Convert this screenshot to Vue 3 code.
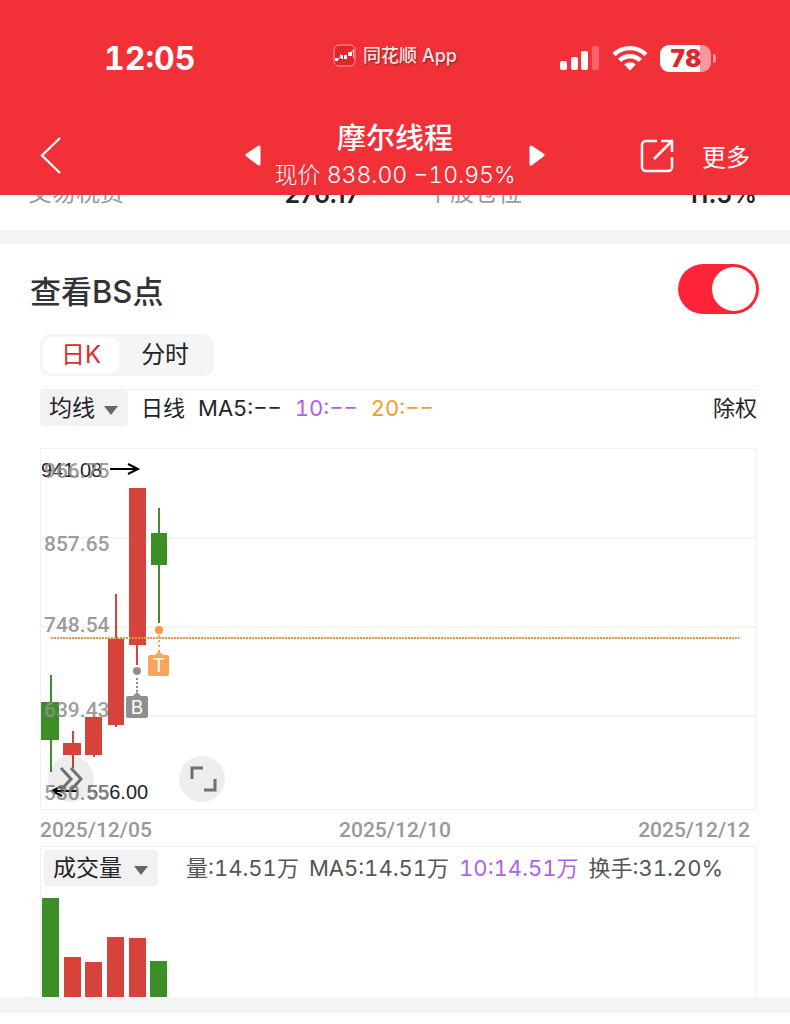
<template>
    <div class="page">
        <header class="header">
            <div class="status">
                <span class="status__time">12:05</span>
                <span class="status__app">
                    <svg width="24" height="24" viewBox="0 0 24 24">
                        <rect x="1" y="1" width="21" height="21" rx="5" fill="#e3262d" stroke="#ff9c9f" />
                        <path d="M3 15h3M6 14l2-1M12 12l2-1M17 9l3-2" stroke="#fff" fill="none" />
                        <path d="M2 14h3v3H2zM8 11h2v4H8zM11 11h3v4h-3zM16 8h3v4h-3z" fill="#fff" />
                        <path d="M7.5 10v4M15.5 8v4M20.5 5v9" stroke="#ffc9ca" fill="none" />
                    </svg>
                    同花顺 App
                </span>
                <span class="status__icons">
                    <svg width="40" height="26" viewBox="0 0 40 26">
                        <rect x="0" y="16" width="7" height="9" rx="2" fill="#fff" />
                        <rect x="11" y="12" width="7" height="13" rx="2" fill="#fff" />
                        <rect x="21" y="6" width="7" height="19" rx="2" fill="#fff" />
                        <rect x="32" y="1" width="7" height="24" rx="2" fill="#fff" opacity="0.25" />
                    </svg>
                    <svg width="36" height="26" viewBox="0 0 36 26">
                        <g fill="none" stroke="#fff" stroke-width="4.4">
                            <path d="M2 9.6a23 23 0 0 1 32 0" />
                            <path d="M7.6 15.4a15 15 0 0 1 20.8 0" />
                        </g>
                        <path d="M12.2 19.6a8.4 8.4 0 0 1 11.6 0L18 25.4z" fill="#fff" />
                    </svg>
                    <span class="battery"><span class="battery__body">78</span></span>
                </span>
            </div>
            <div class="nav">
                <button class="icon-btn" aria-label="返回">
                    <svg width="24" height="40" viewBox="0 0 24 40">
                        <path d="M20 2L2 19.500L20 37" fill="none" stroke="#fff" stroke-width="2.200" />
                    </svg>
                </button>
                <div class="stock">
                    <button class="icon-btn" aria-label="上一只">
                        <svg width="16" height="22" viewBox="0 0 16 22">
                            <path d="M2 10L14 2v17z" fill="#fff" stroke="#fff" stroke-width="3" stroke-linejoin="round" />
                        </svg>
                    </button>
                    <div class="stock__info">
                        <h1>摩尔线程</h1>
                        <p>现价 838.00 −10.95%</p>
                    </div>
                    <button class="icon-btn" aria-label="下一只">
                        <svg width="16" height="22" viewBox="0 0 16 22">
                            <path d="M14 10L2 2v17z" fill="#fff" stroke="#fff" stroke-width="3" stroke-linejoin="round" />
                        </svg>
                    </button>
                </div>
                <div class="nav__right">
                    <button class="icon-btn" aria-label="分享">
                        <svg width="34" height="34" viewBox="0 0 34 34" fill="none" stroke="#fff" stroke-width="2.500">
                            <path d="M17 2H6a4 4 0 0 0-4 4v22a4 4 0 0 0 4 4h22a4 4 0 0 0 4-4V18" />
                            <path d="M21 2h11v11M32 2L14 20" />
                        </svg>
                    </button>
                    <button class="more">更多</button>
                </div>
            </div>
        </header>

        <dl class="summary">
            <div><dt>交易税费</dt><dd>276.17</dd></div>
            <div><dt>个股仓位</dt><dd>11.5%</dd></div>
        </dl>

        <main class="card">
            <div class="bs">
                <label for="bs">查看BS点</label>
                <input id="bs" v-model="showBs" class="switch" type="checkbox">
            </div>

            <div class="content">
                <div class="tabs">
                    <button
                        v-for="tab in tabs"
                        :key="tab"
                        :class="{ active: tab === currentTab }"
                        @click="currentTab = tab"
                    >{{ tab }}</button>
                </div>

                <div class="indicators">
                    <span class="dropdown">
                        <select aria-label="主图指标"><option>均线</option></select>
                    </span>
                    <span>日线</span>
                    <span>MA5:−−</span>
                    <span class="purple">10:−−</span>
                    <span class="yellow">20:−−</span>
                    <span class="indicators__right">除权</span>
                </div>

                <div class="chart">
                    <svg class="chart__svg" width="100%" height="360">
                        <line v-for="y in [89, 178, 267]" :key="y" x1="0" x2="100%" :y1="y" :y2="y" stroke="#f4f4f4" stroke-width="2" />
                        <g v-for="c in candles" :key="c.x" :fill="c.up ? red : green">
                            <rect :x="c.x" :y="c.open" :width="c.w" :height="c.close - c.open" />
                            <rect :x="c.wick" :y="c.high" width="2" :height="c.low - c.high" />
                        </g>
                        <!-- линия текущей цены -->
                        <line x1="10" x2="97.7%" y1="189" y2="189" stroke="#ef9045" stroke-width="2" stroke-dasharray="2 1" />
                        <g v-if="showBs">
                            <circle cx="118" cy="181" r="4" fill="#fd9640" />
                            <path d="M118 186v17" stroke="#fda45c" stroke-width="2" stroke-dasharray="2 3" />
                            <path d="M109 206h5l4-4 4 4h4a2 2 0 0 1 2 2v17a2 2 0 0 1-2 2h-17a2 2 0 0 1-2-2v-17a2 2 0 0 1 2-2z" fill="#fda45c" />
                            <text class="mark" x="118" y="223">T</text>
                            <circle cx="96" cy="222" r="4" fill="#8f8f8f" />
                            <path d="M96 229v15" stroke="#8f8f8f" stroke-width="2" stroke-dasharray="2 2" />
                            <path d="M87 247h5l4-4 4 4h5a2 2 0 0 1 2 2v18a2 2 0 0 1-2 2h-18a2 2 0 0 1-2-2v-18a2 2 0 0 1 2-2z" fill="#8f8f8f" />
                            <text class="mark" x="96" y="265">B</text>
                        </g>
                        <text class="peak" x="0" y="28">941.08</text>
                        <path class="arrow" d="M69 20h28M87 15l10 5l-10 5" />
                        <text class="peak" x="46" y="350">556.00</text>
                        <path class="arrow" d="M36 342H11M21 337l-10 5l10 5" />
                        <text v-for="l in priceLabels" :key="l.y" class="price" x="3" :y="l.y">{{ l.text }}</text>
                    </svg>
                    <div class="chart__tools">
                        <button aria-label="展开">
                            <svg width="46" height="46" viewBox="0 0 46 46">
                                <path d="M13 12l10 11l-10 11M23 12l10 11l-10 11" />
                            </svg>
                        </button>
                        <button aria-label="全屏">
                            <svg width="46" height="46" viewBox="0 0 46 46">
                                <path d="M13 23V12h11M25 34h11V23" />
                            </svg>
                        </button>
                    </div>
                </div>

                <div class="dates">
                    <span>2025/12/05</span>
                    <span>2025/12/10</span>
                    <span>2025/12/12</span>
                </div>

                <div class="volume">
                    <div class="volume__head">
                        <span class="dropdown dropdown--wide">
                            <select aria-label="副图指标"><option>成交量</option></select>
                        </span>
                        <span>量:14.51万</span>
                        <span>MA5:14.51万</span>
                        <span class="purple">10:14.51万</span>
                        <span>换手:31.20%</span>
                    </div>
                    <svg class="chart__svg" width="100%" height="111">
                        <rect
                            v-for="v in volumes"
                            :key="v.x"
                            :x="v.x"
                            :y="111 - v.h"
                            width="17"
                            :height="v.h"
                            :fill="v.up ? red : green"
                        />
                    </svg>
                </div>
            </div>
        </main>
        <div class="divider"></div>
    </div>
</template>

<script setup>
import { ref } from "vue";

const red = "#d5433b";
const green = "#3e8e28";

const showBs = ref(true);
const tabs = ["日K", "分时"];
const currentTab = ref("日K");

const candles = [
    { x: 0, w: 18, open: 253, close: 291, wick: 9, high: 226, low: 323, up: false },
    { x: 22, w: 18, open: 294, close: 306, wick: 31, high: 282, low: 319, up: true },
    { x: 44, w: 17, open: 268, close: 306, wick: 52, high: 268, low: 308, up: true },
    { x: 67, w: 16, open: 190, close: 276, wick: 74, high: 145, low: 278, up: true },
    { x: 88, w: 17, open: 39, close: 196, wick: 95, high: 39, low: 216, up: true },
    { x: 110, w: 16, open: 84, close: 116, wick: 117, high: 59, low: 174, up: false },
];

const priceLabels = [
    { text: "966.75", y: 29 },
    { text: "857.65", y: 102 },
    { text: "748.54", y: 183 },
    { text: "639.43", y: 268 },
    { text: "530.55", y: 351 },
];

const volumes = [
    { x: 1, h: 99, up: false },
    { x: 23, h: 40, up: true },
    { x: 44, h: 35, up: true },
    { x: 66, h: 60, up: true },
    { x: 88, h: 59, up: true },
    { x: 109, h: 36, up: false },
];
</script>

<style>
body {
    background: #ffffff;
}
</style>

<style scoped>
.page {
    font-family: Inter, "Noto Sans CJK SC", sans-serif;
    font-variant-numeric: tabular-nums;
    color: #222428;
}
button,
select {
    font: inherit;
    color: inherit;
    border: 0;
    padding: 0;
    background: none;
}
.header {
    background: #f23038;
    color: #ffffff;
    height: 195px;
}
.status,
.nav {
    display: grid;
    grid-template-columns: 1fr auto 1fr;
    align-items: center;
}
.status {
    height: 116px;
    padding: 0 74px;
}
.status__time {
    padding-left: 30px;
    font-size: 32px;
    font-weight: 700;
}
.status__app {
    display: flex;
    align-items: center;
    gap: 6px;
    font-size: 18px;
    font-weight: 500;
    line-height: 24px;
    color: #ffe4e4;
    text-shadow: 1px 1px 2px #8c2020;
    padding-bottom: 4px;
}
.status__icons {
    display: flex;
    align-items: center;
    justify-content: flex-end;
    gap: 12px;
}
.battery {
    display: flex;
    align-items: center;
    gap: 2px;
}
.battery::after {
    content: "";
    width: 3px;
    height: 9px;
    border-radius: 0 4px 4px 0;
    background: #f9989c;
}
.battery__body {
    width: 51px;
    height: 27px;
    border-radius: 9px;
    background: linear-gradient(to right, #ffffff 78%, #f9989c 78%);
    color: #e0262f;
    font-size: 24px;
    font-weight: 900;
    line-height: 27px;
    text-align: center;
}
.nav {
    height: 79px;
    padding: 0 40px;
}
.icon-btn {
    display: flex;
    justify-self: start;
}
.stock {
    display: flex;
    align-items: center;
    gap: 13px;
}
.stock__info {
    text-align: center;
}
h1 {
    margin: 0;
    font-size: 29px;
    font-weight: 500;
    line-height: 38px;
}
.stock p {
    margin: 0;
    font-size: 23px;
    font-weight: 300;
    line-height: 34px;
}
.nav__right {
    display: flex;
    align-items: center;
    justify-content: flex-end;
    gap: 28px;
}
.more {
    padding-top: 4px;
    font-size: 24px;
    line-height: 34px;
}
.summary {
    display: grid;
    grid-template-columns: 332px 1fr;
    column-gap: 66px;
    align-content: end;
    height: 17px;
    margin: 0;
    padding: 0 33px 18px 28px;
    overflow: hidden;
    font-size: 24px;
    line-height: 34px;
    border-bottom: 14px solid #f4f4f4;
}
.summary div {
    display: flex;
    justify-content: space-between;
}
.summary dt {
    color: #999999;
}
.summary dd {
    margin: 0;
    font-size: 25px;
    font-weight: 600;
    font-variant-numeric: normal;
    line-height: 36px;
}
.bs {
    display: flex;
    align-items: center;
    justify-content: space-between;
    height: 90px;
    padding: 0 31px 0 30px;
    font-size: 31px;
    font-weight: 500;
    color: #333333;
}
.switch {
    appearance: none;
    margin: 0;
    width: 81px;
    height: 50px;
    padding: 3px;
    box-sizing: border-box;
    border-radius: 25px;
    background: #d8d8d8;
}
.switch::before {
    content: "";
    display: block;
    width: 44px;
    height: 44px;
    border-radius: 50%;
    background: #ffffff;
}
.switch:checked {
    background: #ff2438;
}
.switch:checked::before {
    margin-left: auto;
}
.content {
    padding: 0 33px 0 40px;
}
.tabs {
    display: inline-flex;
    padding: 3px;
    border-radius: 10px;
    background: #f5f5f5;
    font-size: 24px;
    line-height: 36px;
    vertical-align: top;
}
.tabs button {
    padding: 0 18px;
    border-radius: 8px;
}
.tabs button + button {
    padding: 0 22px;
}
.tabs .active {
    background: #ffffff;
    color: #e02a2e;
}
.indicators {
    display: flex;
    align-items: center;
    gap: 13px;
    margin-top: 13px;
    border-top: 1px solid #f0f0f0;
    font-size: 22px;
    line-height: 36px;
}
.indicators__right {
    margin-left: auto;
}
.dropdown {
    position: relative;
    width: 88px;
}
.dropdown--wide {
    width: 114px;
}
.dropdown select {
    appearance: none;
    display: block;
    width: 100%;
    height: 36px;
    padding-left: 9px;
    border-radius: 4px;
    background: #f2f2f2;
    color: #222428;
    font-size: 23px;
}
.dropdown::after {
    content: "";
    position: absolute;
    right: 10px;
    top: 16px;
    border: 7px solid transparent;
    border-top: 9px solid #666666;
    border-bottom: 0;
    pointer-events: none;
}
.purple {
    color: #b061ec;
}
.yellow {
    color: #e9a225;
}
.chart {
    position: relative;
    margin-top: 22px;
    border: 1px solid #f0f0f0;
}
.chart__svg {
    display: block;
}
.price {
    font-family: Roboto, sans-serif;
    font-size: 21px;
    font-weight: 500;
    fill: #8f8f8f;
    fill-opacity: 0.9;
}
.peak {
    font-family: "Liberation Sans", sans-serif;
    font-size: 20px;
    fill: #222428;
}
.arrow {
    fill: none;
    stroke: #000000;
    stroke-width: 2;
}
.mark {
    font-size: 19px;
    fill: #ffffff;
    text-anchor: middle;
}
.chart__tools {
    position: absolute;
    left: 7px;
    bottom: 7px;
    display: flex;
    gap: 85px;
}
.chart__tools button {
    display: flex;
    border-radius: 50%;
    background: rgba(0, 0, 0, 0.07);
}
.chart__tools path {
    fill: none;
    stroke: #707070;
    stroke-width: 3;
}
.dates {
    display: flex;
    justify-content: space-between;
    padding: 4px 7px 0 0;
    font-family: Roboto, sans-serif;
    font-size: 21px;
    font-weight: 500;
    line-height: 32px;
    color: #999999;
}
.volume {
    border: 1px solid #f0f0f0;
    border-bottom: 0;
}
.volume__head {
    display: flex;
    align-items: center;
    gap: 10px;
    padding: 3px 3px 0;
    font-size: 22px;
    line-height: 36px;
    color: #555555;
    white-space: nowrap;
}
.dropdown--wide {
    margin-right: 18px;
}
.divider {
    height: 16px;
    background: #f4f4f4;
}
</style>
